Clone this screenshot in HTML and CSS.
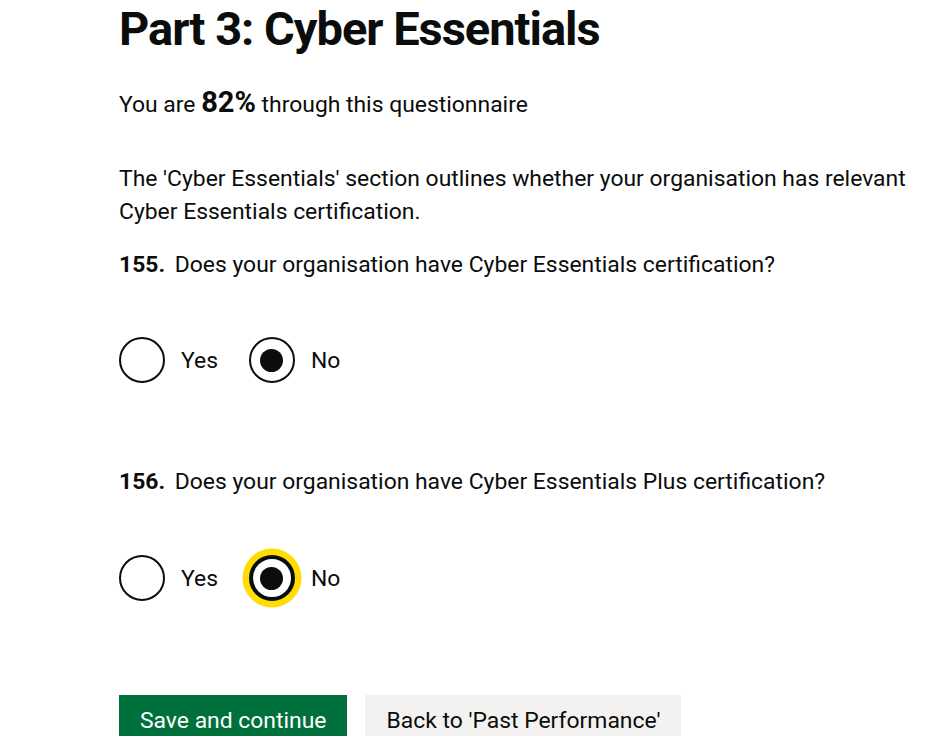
FILE: index.html
```html
<!DOCTYPE html>
<html lang="en">
<head>
<meta charset="utf-8">
<title>Part 3: Cyber Essentials</title>
<link rel="stylesheet" href="styles.css">
</head>
<body>
<main class="page">
  <h1 class="title">Part 3: Cyber Essentials</h1>
  <p class="progress">You are <strong class="pct">82%</strong> through this questionnaire</p>
  <p class="intro">The 'Cyber Essentials' section outlines whether your organisation has relevant Cyber Essentials certification.</p>

  <fieldset class="question q1">
    <legend class="legend"><span class="num">155.</span> Does your organisation have Cyber Essentials certification?</legend>
    <div class="radios">
      <label class="radio"><span class="circle"></span><span class="label">Yes</span></label>
      <label class="radio"><span class="circle checked"></span><span class="label">No</span></label>
    </div>
  </fieldset>

  <fieldset class="question q2">
    <legend class="legend"><span class="num">156.</span> Does your organisation have Cyber Essentials Plus certification?</legend>
    <div class="radios">
      <label class="radio"><span class="circle"></span><span class="label">Yes</span></label>
      <label class="radio"><span class="circle checked focus"></span><span class="label">No</span></label>
    </div>
  </fieldset>

  <div class="buttons">
    <button class="btn btn-primary">Save and continue</button>
    <button class="btn btn-secondary">Back to 'Past Performance'</button>
  </div>
</main>
</body>
</html>
```
FILE: styles.css
```css
html, body {
  margin: 0;
  padding: 0;
  background: #ffffff;
}
body {
  font-family: Roboto, "Liberation Sans", Arial, sans-serif;
  color: #0b0c0c;
  overflow: hidden;
}
.page {
  padding: 0 0 0 119px;
  width: 820px;
}
.title {
  margin: 0;
  padding-top: 4px;
  font-size: 47px;
  line-height: 50px;
  font-weight: 700;
  letter-spacing: -1px;
}
.progress {
  margin: 34px 0 0;
  font-size: 22.9px;
  line-height: 28px;
}
.pct {
  font-size: 29px;
}
.intro {
  margin: 43px 0 0;
  font-size: 22.9px;
  line-height: 33px;
}
.question {
  border: 0;
  margin: 0;
  padding: 0;
}
.q1 { margin-top: 23px; }
.q2 { margin-top: 85px; }
.legend {
  padding: 0;
  font-size: 22.9px;
  line-height: 28px;
}
.num {
  font-weight: 700;
  margin-right: 4px;
}
.radios {
  display: flex;
  gap: 31px;
  margin-top: 58px;
}
.q2 .radios {
  margin-top: 59px;
}
.radio {
  display: flex;
  align-items: center;
  gap: 16px;
  font-size: 22.9px;
}
.circle {
  box-sizing: border-box;
  width: 46px;
  height: 46px;
  border: 2.5px solid #0b0c0c;
  border-radius: 50%;
  display: flex;
  align-items: center;
  justify-content: center;
  background: #fff;
}
.circle.checked::after {
  content: "";
  width: 23px;
  height: 23px;
  border-radius: 50%;
  background: #0b0c0c;
}
.circle.focus {
  border-width: 4.5px;
  box-shadow: 0 0 0 6.5px #ffdd00;
}
.buttons {
  display: flex;
  gap: 18px;
  margin-top: 94px;
}
.btn {
  font-family: inherit;
  font-size: 22.9px;
  border: 0;
  border-radius: 0;
  padding: 12px 21px 14px;
  line-height: 28px;
}
.btn-primary {
  background: #00703c;
  color: #fff;
  box-shadow: 0 2px 0 #002d18;
}
.btn-secondary {
  background: #f3f2f1;
  color: #0b0c0c;
  box-shadow: 0 2px 0 #929191;
}
```
